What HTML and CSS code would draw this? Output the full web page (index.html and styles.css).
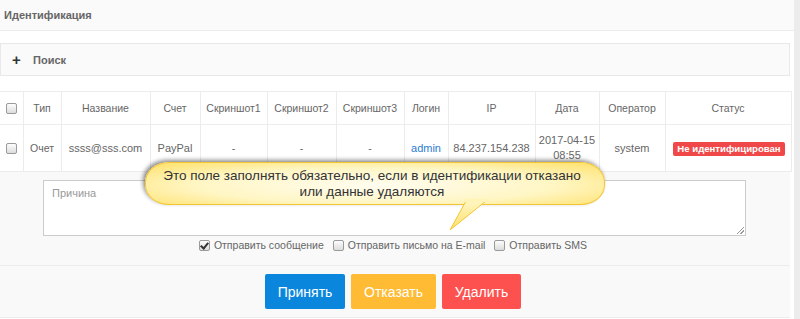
FILE: index.html
```html
<!DOCTYPE html>
<html lang="ru">
<head>
<meta charset="utf-8">
<link rel="stylesheet" href="styles.css">
</head>
<body>
<div class="page">
  <div class="title-bar">Идентификация</div>
  <div class="search-panel"><span class="plus">+</span><span>Поиск</span></div>
  <table class="grid">
    <colgroup>
      <col style="width:23px"><col style="width:38px"><col style="width:89px"><col style="width:50px">
      <col style="width:67px"><col style="width:69px"><col style="width:68px"><col style="width:44px">
      <col style="width:87px"><col style="width:64px"><col style="width:66px"><col style="width:126px">
    </colgroup>
    <thead>
      <tr>
        <th><span class="cb"></span></th>
        <th>Тип</th><th>Название</th><th>Счет</th><th>Скриншот1</th><th>Скриншот2</th><th>Скриншот3</th>
        <th>Логин</th><th>IP</th><th>Дата</th><th>Оператор</th><th>Статус</th>
      </tr>
    </thead>
    <tbody>
      <tr>
        <td><span class="cb"></span></td>
        <td>Очет</td><td class="latin">ssss@sss.com</td><td class="latin">PayPal</td><td>-</td><td>-</td><td>-</td>
        <td class="latin"><a class="link">admin</a></td><td class="latin">84.237.154.238</td><td class="latin">2017-04-15<br>08:55</td><td class="latin">system</td>
        <td><span class="badge">Не идентифицирован</span></td>
      </tr>
    </tbody>
  </table>
  <div class="reason-panel">
    <div class="textarea">Причина<span class="grip"></span></div>
    <div class="options">
      <label class="opt"><span class="cb checked"></span>Отправить сообщение</label>
      <label class="opt"><span class="cb"></span>Отправить письмо на E-mail</label>
      <label class="opt"><span class="cb"></span>Отправить SMS</label>
    </div>
  </div>
  <div class="actions">
    <button class="btn blue">Принять</button>
    <button class="btn yellow">Отказать</button>
    <button class="btn red">Удалить</button>
  </div>
  <div class="bubble">Это поле заполнять обязательно, если в идентификации отказано<br>или данные удаляются</div>
  <svg class="tail" width="50" height="34" viewBox="0 0 50 34">
    <defs>
      <linearGradient id="tg" x1="0" y1="0" x2="0" y2="1">
        <stop offset="0" stop-color="#fff6c4"/>
        <stop offset="1" stop-color="#ffe066"/>
      </linearGradient>
    </defs>
    <polygon points="26,0 46,0 10,29" fill="url(#tg)" stroke="#f3c535" stroke-width="1"/>
    <rect x="24" y="-2" width="24" height="3" fill="#fff3b8"/>
  </svg>
</div>
</body>
</html>
```

FILE: styles.css
```css
html, body {
  margin: 0;
  padding: 0;
}
body {
  background: #ececec;
  font-family: "Liberation Sans", Arial, sans-serif;
  font-size: 11px;
  color: #666;
  width: 800px;
  height: 319px;
  overflow: hidden;
}
.page {
  position: relative;
  width: 794px;
  height: 319px;
  background: #fff;
}
.title-bar {
  height: 30px;
  background: #fafafa;
  border-bottom: 1px solid #ececec;
  display: flex;
  align-items: center;
  padding-left: 4px;
  font-weight: bold;
  color: #666;
  font-size: 11px;
}
.search-panel {
  margin-top: 12px;
  width: 788px;
  height: 31px;
  border: 1px solid #e8e8e8;
  background: #fafafa;
  display: flex;
  align-items: center;
  font-weight: bold;
  color: #666;
}
.plus {
  font-size: 15px;
  color: #333;
  margin-left: 11px;
  width: 21px;
}
.grid {
  margin-top: 15px;
  border-collapse: collapse;
  table-layout: fixed;
  width: 791px;
}
.grid th, .grid td {
  border: 1px solid #ececec;
  text-align: center;
  padding: 0;
  font-weight: normal;
  color: #666;
  font-size: 10.5px;
  line-height: 15px;
}
.grid td.latin { font-size: 11px; }
.grid th:first-child, .grid td:first-child {
  border-left: none;
}
.grid th { height: 32px; }
.grid td { height: 46px; }
.link { color: #2b7dd0; }
.badge {
  display: inline-block;
  background: #f04848;
  color: #fff;
  font-weight: bold;
  font-size: 9.6px;
  line-height: 14px;
  padding: 0 4px;
  border-radius: 2px;
  margin-left: 2px;
}
.cb {
  display: inline-block;
  width: 9px;
  height: 9px;
  border: 1px solid #9a9a9a;
  border-radius: 2px;
  background: linear-gradient(#fdfdfd, #dcdcdc);
  vertical-align: middle;
  position: relative;
}
.cb.checked::after {
  content: "";
  position: absolute;
  left: 2px;
  top: 0;
  width: 3px;
  height: 6px;
  border: solid #333;
  border-width: 0 2px 2px 0;
  transform: rotate(40deg);
}
.reason-panel {
  width: 790px;
  background: #f9f9f9;
  border-bottom: 1px solid #ececec;
  padding-top: 8px;
  box-sizing: border-box;
  height: 94px;
}
.textarea {
  position: relative;
  margin-left: 43px;
  width: 688px;
  height: 44px;
  border: 1px solid #ccc;
  background: #fff;
  padding: 5px 5px 5px 8px;
  color: #999;
  font-size: 11px;
  line-height: 14px;
}
.grip {
  position: absolute;
  right: 1px;
  bottom: 1px;
  width: 7px;
  height: 7px;
  background: linear-gradient(135deg, transparent 45%, #999 45%, #999 55%, transparent 55%, transparent 70%, #999 70%, #999 80%, transparent 80%);
}
.options {
  display: flex;
  justify-content: center;
  gap: 9px;
  margin-top: 1px;
  padding-right: 4px;
  height: 16px;
  align-items: center;
}
.opt {
  display: flex;
  align-items: center;
  gap: 4px;
  color: #666;
  font-size: 10.5px;
}
.actions {
  width: 790px;
  height: 52px;
  background: #f9f9f9;
  border-bottom: 1px solid #ececec;
  box-sizing: border-box;
  display: flex;
  justify-content: center;
  align-items: center;
  gap: 6px;
  padding-right: 4px;
}
.btn {
  height: 35px;
  border: none;
  border-radius: 2px;
  color: #fff;
  font-family: "Liberation Sans", Arial, sans-serif;
  font-size: 14px;
  padding: 0;
}
.blue { background: #0a87dc; width: 80px; }
.yellow { background: #ffbb33; width: 85px; }
.red { background: #fd5150; width: 79px; }
.bubble {
  position: absolute;
  left: 145px;
  top: 162px;
  width: 460px;
  height: 43px;
  border: 1px solid #f3c535;
  border-radius: 24px / 20px;
  background: radial-gradient(ellipse at 50% 55%, #fffdf0 0%, #fff6c4 55%, #ffe066 100%);
  box-shadow: -2px -2px 4px rgba(0,0,0,0.45);
  color: #333;
  font-size: 13.5px;
  line-height: 16px;
  text-align: center;
  padding-top: 5px;
  padding-right: 6px;
  box-sizing: border-box;
}
.tail {
  position: absolute;
  left: 440px;
  top: 201px;
  overflow: visible;
}
```
